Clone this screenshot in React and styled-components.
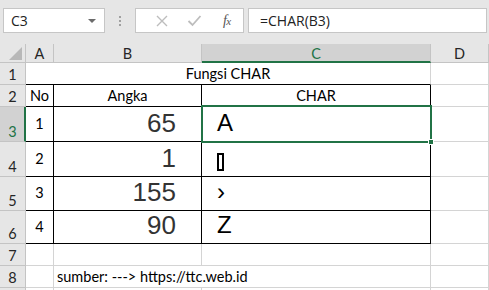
import React from "react";
import styled, { createGlobalStyle, css } from "styled-components";

const GlobalStyle = createGlobalStyle`
  *, *::before, *::after { box-sizing: border-box; }
  body {
    margin: 0;
    background: #ffffff;
    font-family: "Lato", "Liberation Sans", sans-serif;
  }
`;

const GREEN = "#217346";
const GRID = "#d4d4d4";
const HEAD_LINE = "#c4c4c4";

const Screen = styled.div`
  width: 489px;
  height: 290px;
  overflow: hidden;
  background: #ffffff;
`;

/* ---------- formula bar ---------- */

const Toolbar = styled.div`
  height: 44px;
  background: #e6e6e6;
  display: flex;
  align-items: flex-start;
  padding: 8px 2px 0 3px;
`;

const NameBox = styled.div`
  width: 102px;
  height: 25px;
  background: #fff;
  border: 1px solid #c6c6c6;
  display: flex;
  align-items: center;
  justify-content: space-between;
  padding: 0 8px 0 7px;
  font-family: "Open Sans", "Noto Sans", sans-serif;
  font-size: 14px;
  color: #222;
`;

const Caret = styled.span`
  width: 0;
  height: 0;
  border-left: 4px solid transparent;
  border-right: 4px solid transparent;
  border-top: 4px solid #6b6b6b;
  margin-top: 1px;
`;

const Grip = styled.div`
  width: 30px;
  height: 25px;
  display: flex;
  flex-direction: column;
  align-items: center;
  justify-content: center;
  gap: 2px;
`;

const GripDot = styled.span`
  width: 2px;
  height: 2px;
  background: #a0a0a0;
`;

const IconBox = styled.div`
  width: 109px;
  height: 25px;
  background: #fff;
  border: 1px solid #c6c6c6;
  display: flex;
  align-items: center;
  padding-left: 10px;
`;

const IconSlot = styled.span`
  width: 37px;
  display: flex;
  justify-content: center;
  align-items: center;
`;

const Fx = styled.span`
  font-family: "Liberation Serif", serif;
  font-style: italic;
  font-size: 14px;
  color: #555;
  letter-spacing: -0.5px;
  & small { font-size: 11px; }
`;

const FormulaInput = styled.div`
  flex: 1;
  height: 25px;
  margin-left: 4px;
  background: #fff;
  border: 1px solid #c6c6c6;
  display: flex;
  align-items: center;
  padding-left: 11px;
  font-family: "Open Sans", "Noto Sans", sans-serif;
  font-size: 14px;
  color: #222;
`;

/* ---------- sheet ---------- */

const Sheet = styled.div`
  display: grid;
  grid-template-columns: 26px 28px 148px 229px 58px;
  grid-template-rows: 19px 22px 22px 35px 35px 34px 33px 22px 22px 22px;
`;

const Corner = styled.div`
  background: #e6e6e6;
  border-right: 1px solid ${HEAD_LINE};
  border-bottom: 1px solid ${HEAD_LINE};
  display: flex;
  align-items: flex-end;
  justify-content: flex-end;
  padding: 0 3px 2px 0;
`;

const Triangle = styled.span`
  width: 0;
  height: 0;
  border-left: 13px solid transparent;
  border-bottom: 13px solid #b8b8b8;
`;

const ColHead = styled.div`
  background: ${(p) => (p.$active ? "#d2d2d2" : "#e6e6e6")};
  color: ${(p) => (p.$active ? GREEN : "#262626")};
  border-right: 1px solid ${HEAD_LINE};
  border-bottom: ${(p) => (p.$active ? `2px solid ${GREEN}` : `1px solid ${HEAD_LINE}`)};
  display: flex;
  align-items: center;
  justify-content: center;
  font-size: 14.5px;
  padding-top: ${(p) => (p.$active ? "1px" : "0")};
`;

const RowHead = styled.div`
  background: ${(p) => (p.$active ? "#d2d2d2" : "#e6e6e6")};
  color: ${(p) => (p.$active ? GREEN : "#262626")};
  border-right: ${(p) => (p.$active ? `2px solid ${GREEN}` : `1px solid ${HEAD_LINE}`)};
  border-bottom: 1px solid ${HEAD_LINE};
  display: flex;
  align-items: flex-end;
  justify-content: center;
  padding-bottom: 1px;
  font-size: 14.5px;
  padding-left: ${(p) => (p.$active ? "1px" : "0")};
`;

const alignments = {
  left: "flex-start",
  center: "center",
  right: "flex-end",
};

const Cell = styled.div`
  position: relative;
  background: #fff;
  border-right: 1px solid ${(p) => (p.$rb ? "#000" : GRID)};
  border-bottom: 1px solid ${(p) => (p.$bb ? "#000" : GRID)};
  grid-column: span ${(p) => p.$span || 1};
  display: flex;
  justify-content: ${(p) => alignments[p.$align || "left"]};
  align-items: ${(p) => (p.$middle ? "center" : "flex-end")};
  padding: ${(p) => p.$pad || "0 3px 2px"};
  font-size: 14.5px;
  color: #000;
  white-space: nowrap;
  ${(p) =>
    p.$selected &&
    css`
      z-index: 2;
      &::after {
        content: "";
        position: absolute;
        top: -2px;
        left: -1px;
        right: -2px;
        bottom: -2px;
        border: 2px solid ${GREEN};
        pointer-events: none;
      }
    `}
`;

const FillHandle = styled.span`
  position: absolute;
  right: -4px;
  bottom: -4px;
  width: 6px;
  height: 6px;
  background: ${GREEN};
  border: 1px solid #fff;
  z-index: 3;
`;

const BigNumber = styled.span`
  font-family: "Liberation Sans", Arial, sans-serif;
  font-size: 26px;
  line-height: 1;
  color: #333;
`;

const BigChar = styled.span`
  font-family: "Liberation Sans", Arial, sans-serif;
  font-size: 24px;
  line-height: 1;
  color: #000;
`;

const MissingGlyph = styled.span`
  display: inline-block;
  width: 7px;
  height: 18px;
  border: 2px solid #000;
  margin-bottom: -1px;
`;

const rows = [
  { no: 1, value: 65, char: "A" },
  { no: 2, value: 1, char: null },
  { no: 3, value: 155, char: "›" },
  { no: 4, value: 90, char: "Z" },
];

const CrossIcon = () => (
  <svg width="14" height="14" viewBox="0 0 14 14">
    <path d="M2 2 L12 12 M12 2 L2 12" stroke="#bdbdbd" strokeWidth="1.4" fill="none" />
  </svg>
);

const CheckIcon = () => (
  <svg width="15" height="13" viewBox="0 0 15 13">
    <path d="M1.5 7 L5.5 11 L13.5 2" stroke="#bdbdbd" strokeWidth="1.8" fill="none" />
  </svg>
);

export default function App() {
  return (
    <Screen>
      <GlobalStyle />
      <Toolbar>
        <NameBox>
          C3
          <Caret />
        </NameBox>
        <Grip>
          <GripDot />
          <GripDot />
          <GripDot />
        </Grip>
        <IconBox>
          <IconSlot>
            <CrossIcon />
          </IconSlot>
          <IconSlot>
            <CheckIcon />
          </IconSlot>
          <IconSlot>
            <Fx>
              f<small>x</small>
            </Fx>
          </IconSlot>
        </IconBox>
        <FormulaInput>=CHAR(B3)</FormulaInput>
      </Toolbar>

      <Sheet>
        <Corner>
          <Triangle />
        </Corner>
        <ColHead>A</ColHead>
        <ColHead>B</ColHead>
        <ColHead $active>C</ColHead>
        <ColHead>D</ColHead>

        <RowHead>1</RowHead>
        <Cell $span={3} $bb $align="center">
          Fungsi CHAR
        </Cell>
        <Cell />

        <RowHead>2</RowHead>
        <Cell $rb $bb $align="center">No</Cell>
        <Cell $rb $bb $align="center">Angka</Cell>
        <Cell $rb $bb $align="center">CHAR</Cell>
        <Cell />

        {rows.map((r) => (
          <React.Fragment key={r.no}>
            <RowHead $active={r.no === 1}>{r.no + 2}</RowHead>
            <Cell $rb $bb $align="center" $middle $pad="0 0 2px">
              {r.no}
            </Cell>
            <Cell $rb $bb $align="right" $pad="0 25px 5px 0">
              <BigNumber>{r.value}</BigNumber>
            </Cell>
            <Cell $rb $bb $selected={r.no === 1} $pad="0 0 6px 15px">
              {r.char ? <BigChar>{r.char}</BigChar> : <MissingGlyph />}
              {r.no === 1 && <FillHandle />}
            </Cell>
            <Cell />
          </React.Fragment>
        ))}

        <RowHead>7</RowHead>
        <Cell />
        <Cell />
        <Cell />
        <Cell />

        <RowHead>8</RowHead>
        <Cell />
        <Cell $span={2}>sumber: ---&gt; https://ttc.web.id</Cell>
        <Cell />

        <RowHead />
        <Cell />
        <Cell />
        <Cell />
        <Cell />
      </Sheet>
    </Screen>
  );
}
